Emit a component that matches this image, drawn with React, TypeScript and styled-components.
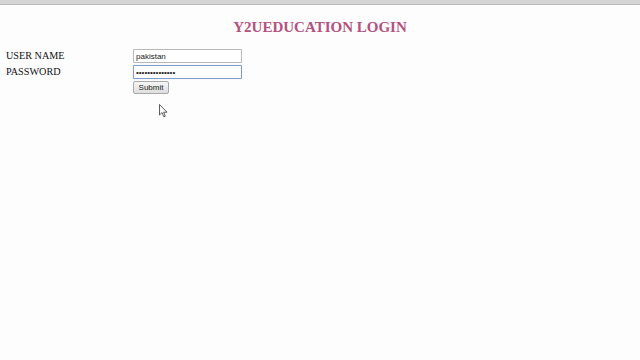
import React from "react";
import styled, { createGlobalStyle } from "styled-components";

const Global = createGlobalStyle`
  html, body { margin: 0; padding: 0; background: #fdfdfd; }
  body { width: 640px; height: 360px; overflow: hidden; font-family: "Liberation Serif", "Times New Roman", serif; }
`;

const Screen = styled.div`
  position: relative;
  width: 640px;
  height: 360px;
  display: flex;
  flex-direction: column;
  background: #fdfdfd;
`;

const TabStrip = styled.div`
  height: 4px;
  background: #d6d6d6;
  border-bottom: 1px solid #b9b9b9;
  flex: none;
`;

const Title = styled.h1`
  margin: 13px 0 0;
  text-align: center;
  font-family: "Liberation Serif", "Times New Roman", serif;
  font-weight: bold;
  font-size: 15px;
  line-height: 18px;
  color: #b3527f;
`;

const Form = styled.form`
  margin: 13px 0 0 6px;
  display: grid;
  grid-template-columns: 127px 110px;
  row-gap: 2px;
  align-items: center;
`;

const Label = styled.label`
  font-family: "Liberation Serif", "Times New Roman", serif;
  font-size: 10.2px;
  line-height: 14px;
  color: #111;
`;

const Field = styled.input<{ $focused?: boolean }>`
  box-sizing: border-box;
  width: 109px;
  height: 14px;
  margin: 0;
  padding: 0 2px;
  font-family: "Liberation Sans", Arial, sans-serif;
  font-size: 8px;
  color: #222;
  background: #fff;
  border: 1px solid ${(p) => (p.$focused ? "#7e9fce" : "#b8b8b8")};
  border-radius: 1px;
  outline: none;
  box-shadow: ${(p) => (p.$focused ? "0 0 1px #a9c1e6" : "none")};
`;

const Submit = styled.button`
  grid-column: 2;
  justify-self: start;
  box-sizing: border-box;
  width: 36px;
  height: 13px;
  margin: 0;
  padding: 0;
  font-family: "Liberation Sans", Arial, sans-serif;
  font-size: 8px;
  color: #222;
  background: linear-gradient(#f6f6f6, #dedede);
  border: 1px solid #a8a8a8;
  border-radius: 2px;
`;

const Pointer = styled.svg`
  position: absolute;
  left: 159px;
  top: 104px;
`;

export default function App() {
  return (
    <Screen>
      <Global />
      <TabStrip />
      <Title>Y2UEDUCATION LOGIN</Title>
      <Form onSubmit={(e) => e.preventDefault()}>
        <Label>USER NAME</Label>
        <Field type="text" defaultValue="pakistan" />
        <Label>PASSWORD</Label>
        <Field type="password" defaultValue="pakistan123456" $focused />
        <Submit type="submit">Submit</Submit>
      </Form>
      <Pointer width="10" height="14" viewBox="0 0 10 14">
        <path d="M0.5 0.5 L0.5 11 L3 8.6 L4.8 12.8 L6.3 12.2 L4.6 8.2 L8 8.2 Z" fill="#fff" stroke="#333" strokeWidth="0.8" strokeLinejoin="round" />
      </Pointer>
    </Screen>
  );
}
